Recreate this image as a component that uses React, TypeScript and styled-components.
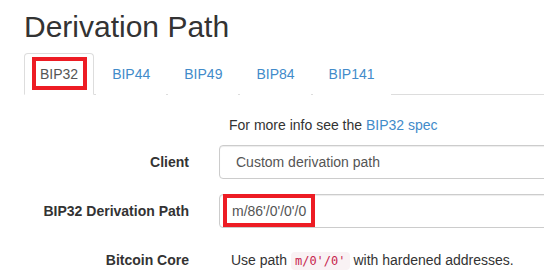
import React from "react";
import styled, { createGlobalStyle } from "styled-components";

const GlobalStyle = createGlobalStyle`
  html, body {
    margin: 0;
    padding: 0;
    overflow: hidden;
    background: #fff;
  }
  body {
    font-family: "Liberation Sans", Arial, sans-serif;
    font-size: 14px;
    line-height: 20px;
    color: #333;
  }
  * {
    box-sizing: border-box;
  }
`;

const Page = styled.div`
  padding: 10px 0 0 24px;
  width: 100%;
  overflow: hidden;
`;

const Title = styled.h2`
  margin: 0 0 10px;
  font-size: 30px;
  font-weight: 500;
  line-height: 33px;
  color: #333;
`;

const Tabs = styled.ul`
  display: flex;
  list-style: none;
  margin: 0;
  padding: 0;
  border-bottom: 1px solid #ddd;
`;

const Tab = styled.li`
  margin: 0 2px -1px 0;
`;

const TabLink = styled.a<{ $active?: boolean }>`
  display: block;
  padding: 10px 15px;
  line-height: 20px;
  border: 1px solid ${(p) => (p.$active ? "#ddd" : "transparent")};
  border-bottom-color: ${(p) => (p.$active ? "#fff" : "transparent")};
  border-radius: 4px 4px 0 0;
  background: #fff;
  color: ${(p) => (p.$active ? "#555" : "#428bca")};
  text-decoration: none;
  cursor: pointer;
`;

const Marked = styled.span`
  position: relative;
  display: inline-block;

  &::after {
    content: "";
    position: absolute;
    top: -7px;
    bottom: -6px;
    left: -8px;
    right: -9px;
    border: 4px solid #ed1c24;
    pointer-events: none;
  }
`;

const Form = styled.div`
  padding-top: 20px;
`;

const Row = styled.div<{ $gap?: number }>`
  display: grid;
  grid-template-columns: 165px 420px;
  column-gap: 30px;
  margin-bottom: ${(p) => p.$gap ?? 15}px;
`;

const Label = styled.label`
  text-align: right;
  font-weight: bold;
  padding-top: 7px;
  line-height: 20px;
`;

const Help = styled.div<{ $indent: number }>`
  padding-left: ${(p) => p.$indent}px;
  line-height: 20px;
`;

const Static = styled(Help)`
  padding-top: 7px;
`;

const Link = styled.a`
  color: #428bca;
  text-decoration: none;
`;

const Select = styled.select`
  width: 100%;
  height: 34px;
  padding: 6px 12px;
  font-family: inherit;
  font-size: 14px;
  color: #555;
  background: #fff;
  border: 1px solid #ccc;
  border-radius: 4px;
  box-shadow: inset 0 1px 1px rgba(0, 0, 0, 0.075);
`;

const InputWrap = styled.div`
  position: relative;
`;

const Input = styled.input`
  display: block;
  width: 100%;
  height: 34px;
  padding: 6px 12px;
  font-family: inherit;
  font-size: 14px;
  color: #555;
  background: #fff;
  border: 1px solid #ccc;
  border-radius: 4px;
  box-shadow: inset 0 1px 1px rgba(0, 0, 0, 0.075);
`;

const InputMark = styled.div`
  position: absolute;
  top: 0;
  left: 4px;
  width: 92px;
  height: 33px;
  border: 4px solid #ed1c24;
  pointer-events: none;
`;

const Code = styled.code`
  padding: 2px 4px;
  font-family: "DejaVu Sans Mono", "Liberation Mono", monospace;
  font-size: 12px;
  color: #c7254e;
  background: #f9f2f4;
  border-radius: 4px;
`;

const tabs = ["BIP32", "BIP44", "BIP49", "BIP84", "BIP141"];

export default function App() {
  return (
    <Page>
      <GlobalStyle />
      <Title>Derivation Path</Title>
      <Tabs>
        {tabs.map((t, i) => (
          <Tab key={t}>
            <TabLink $active={i === 0}>
              {i === 0 ? <Marked>{t}</Marked> : t}
            </TabLink>
          </Tab>
        ))}
      </Tabs>
      <Form>
        <Row $gap={10}>
          <div />
          <Help $indent={10}>
            For more info see the <Link href="#">BIP32 spec</Link>
          </Help>
        </Row>
        <Row>
          <Label>Client</Label>
          <Select defaultValue="custom">
            <option value="custom">Custom derivation path</option>
          </Select>
        </Row>
        <Row>
          <Label>BIP32 Derivation Path</Label>
          <InputWrap>
            <Input defaultValue="m/86'/0'/0'/0" />
            <InputMark />
          </InputWrap>
        </Row>
        <Row>
          <Label>Bitcoin Core</Label>
          <Static $indent={12}>
            Use path <Code>m/0'/0'</Code> with hardened addresses.
          </Static>
        </Row>
      </Form>
    </Page>
  );
}
